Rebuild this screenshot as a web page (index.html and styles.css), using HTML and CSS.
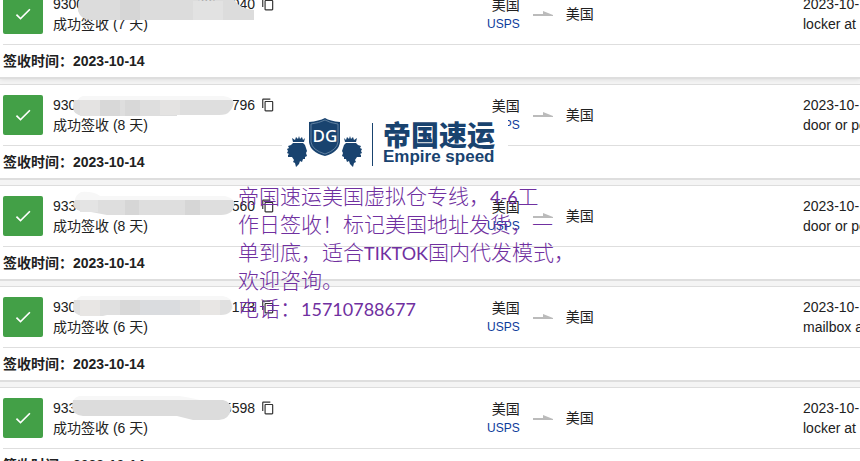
FILE: index.html
```html
<!DOCTYPE html>
<html lang="zh-CN">
<head>
  <meta charset="UTF-8">
  <meta name="viewport" content="width=device-width, initial-scale=1.0">
  <title>帝国速运</title>
  <link rel="stylesheet" href="styles.css">
</head>
<body>

  <!-- 图标 -->
  <svg class="symbols" aria-hidden="true">
    <symbol id="check" viewBox="0 0 24 24"><path d="M9 16.17L4.83 12l-1.42 1.41L9 19 21 7l-1.41-1.41z"/></symbol>
    <symbol id="copy" viewBox="0 0 24 24"><path d="M16 1H4c-1.1 0-2 .9-2 2v14h2V3h12V1zm3 4H8c-1.1 0-2 .9-2 2v14c0 1.1.9 2 2 2h11c1.1 0 2-.9 2-2V7c0-1.1-.9-2-2-2zm0 16H8V7h11v14z"/></symbol>
    <symbol id="arrow" viewBox="0 0 20 8"><path d="M0 4h10V1l10 4v1H0z"/></symbol>
    <g id="lion">
      <path d="M8 24l3 2 1-3 2 2 1-3 1 3 2-2 1 3 2-2-1 4H9z"/>
      <path d="M9 29H19L21 31 22 34 23 37 22 39 23 42 21 43 21 45 19 45 18 48 16 47 15 50 12 53 11 49 9 48 10 46 8 43 4 43 4 41 5 40 3 39 4 37 3 35 5 34 4 32 7 31z"/>
    </g>
  </svg>

  <main class="page">
    <ul class="parcel_list">

      <li class="parcel raised">
        <div class="parcel_main">
          <span class="status"><svg><use href="#check"/></svg></span>
          <div class="track">
            <div class="number">
              <span class="digits"><span>9300</span><span>00000040</span></span>
              <button type="button" class="copy_btn" aria-label="复制"><svg><use href="#copy"/></svg></button>
              <svg class="mask" viewBox="0 0 190 28">
                <path fill="#dcdcdc" d="M8 5H112Q140 8 160 4Q166 15 181 16V26H18Q8 26 5 17Q5 8 8 5z"/>
                <path fill="#d6d6d6" d="M47 5h20v21H47z"/>
                <path fill="#e2e2e2" d="M120 7h30v19h-30z"/>
              </svg>
            </div>
            <p>成功签收 (7 天)</p>
          </div>
          <div class="route">
            <div class="origin"><span>美国</span><a href="#usps">USPS</a></div>
            <svg class="arrow"><use href="#arrow"/></svg>
            <span>美国</span>
          </div>
          <p class="event">2023-10-<br>locker at</p>
        </div>
        <p class="signed">签收时间：2023-10-14</p>
      </li>

      <li class="parcel">
        <div class="parcel_main">
          <span class="status"><svg><use href="#check"/></svg></span>
          <div class="track">
            <div class="number">
              <span class="digits"><span>930</span><span>796</span></span>
              <button type="button" class="copy_btn" aria-label="复制"><svg><use href="#copy"/></svg></button>
              <svg class="mask" viewBox="0 0 190 28">
                <path fill="#f7f7f7" d="M10 1H150Q161 2 161 10L150 14H4Q2 3 10 1z"/>
                <path fill="#dedede" d="M1 5H160Q162 11 156 17Q154 20 146 20H104V21H10Q0 20 0 12z"/>
                <path fill="#e4e3e2" d="M7 5h20v16H7zM87 5h20v15H87z"/>
                <path fill="#d8d8d8" d="M27 5h20v16H27zM52 5h15v16H52z"/>
              </svg>
            </div>
            <p>成功签收 (8 天)</p>
          </div>
          <div class="route">
            <div class="origin"><span>美国</span><a href="#usps">USPS</a></div>
            <svg class="arrow"><use href="#arrow"/></svg>
            <span>美国</span>
          </div>
          <p class="event">2023-10-<br>door or po</p>
        </div>
        <p class="signed">签收时间：2023-10-14</p>
      </li>

      <li class="parcel">
        <div class="parcel_main">
          <span class="status"><svg><use href="#check"/></svg></span>
          <div class="track">
            <div class="number">
              <span class="digits"><span>933</span><span>560</span></span>
              <button type="button" class="copy_btn" aria-label="复制"><svg><use href="#copy"/></svg></button>
              <svg class="mask" viewBox="0 0 190 28">
                <path fill="#f7f7f7" d="M8 -4Q20 -5 27 0H152Q160 2 161 6V12H8Q-4 4 8 -4z"/>
                <path fill="#dedede" d="M2 4H160Q163 11 158 16Q154 19 148 19H34L18 16Q3 17 0 9z"/>
                <path fill="#d6d6d6" d="M52 4h14v15H52zM112 4h15v15h-15z"/>
                <path fill="#e4e4e4" d="M7 4h18v12H7z"/>
              </svg>
            </div>
            <p>成功签收 (8 天)</p>
          </div>
          <div class="route">
            <div class="origin"><span>美国</span><a href="#usps">USPS</a></div>
            <svg class="arrow"><use href="#arrow"/></svg>
            <span>美国</span>
          </div>
          <p class="event">2023-10-<br>door or po</p>
        </div>
        <p class="signed">签收时间：2023-10-14</p>
      </li>

      <li class="parcel">
        <div class="parcel_main">
          <span class="status"><svg><use href="#check"/></svg></span>
          <div class="track">
            <div class="number">
              <span class="digits"><span>930</span><span>173</span></span>
              <button type="button" class="copy_btn" aria-label="复制"><svg><use href="#copy"/></svg></button>
              <svg class="mask" viewBox="0 0 190 28">
                <path fill="#f7f7f7" d="M8 -1H150Q159 1 160 8V12H4Q0 2 8 -1z"/>
                <path fill="#e0e0e0" d="M1 3H157Q161 11 157 15Q154 18 148 18H34L30 19H10Q0 18 0 10z"/>
                <path fill="#e8e6e4" d="M7 3h20v16H7zM127 3h20v15h-20z"/>
                <path fill="#d8d8d8" d="M47 3h20v15H47z"/>
                <path fill="#dadcdf" d="M67 3h40v15H67z"/>
              </svg>
            </div>
            <p>成功签收 (6 天)</p>
          </div>
          <div class="route">
            <div class="origin"><span>美国</span><a href="#usps">USPS</a></div>
            <svg class="arrow"><use href="#arrow"/></svg>
            <span>美国</span>
          </div>
          <p class="event">2023-10-<br>mailbox at</p>
        </div>
        <p class="signed">签收时间：2023-10-14</p>
      </li>

      <li class="parcel">
        <div class="parcel_main">
          <span class="status"><svg><use href="#check"/></svg></span>
          <div class="track">
            <div class="number">
              <span class="digits"><span>933</span><span>5598</span></span>
              <button type="button" class="copy_btn" aria-label="复制"><svg><use href="#copy"/></svg></button>
              <svg class="mask" viewBox="0 0 190 28">
                <path fill="#f7f7f7" d="M6 -2H106Q120 0 130 3V8H2Q-2 0 6 -2z"/>
                <path fill="#dcdcdc" d="M0 2H150Q158 4 158 11Q156 22 146 22H120L104 18H10Q-1 17 -1 8z"/>
              </svg>
            </div>
            <p>成功签收 (6 天)</p>
          </div>
          <div class="route">
            <div class="origin"><span>美国</span><a href="#usps">USPS</a></div>
            <svg class="arrow"><use href="#arrow"/></svg>
            <span>美国</span>
          </div>
          <p class="event">2023-10-<br>locker at</p>
        </div>
        <p class="signed">签收时间：2023-10-14</p>
      </li>

    </ul>

    <!-- 浮在列表上的标志 -->
    <div class="logo">
      <svg class="emblem" viewBox="0 0 82 56">
        <use href="#lion"/>
        <use href="#lion" transform="translate(81 0) scale(-1 1)"/>
        <path d="M25 8Q35 7 41 4Q46 7 56 8V28Q55 38 41 42Q26 38 25 28z"/>
        <path class="trim" d="M27 10Q35 9 41 6Q46 9 54 10V28Q53 36 41 40Q28 36 27 28z"/>
        <text x="41" y="28" text-anchor="middle">DG</text>
      </svg>
      <div class="logo_text">
        <strong>帝国速运</strong>
        <span>Empire speed</span>
      </div>
    </div>

    <!-- 浮在列表上的说明 -->
    <p class="notice">
      帝国速运美国虚拟仓专线，<b>4-6</b>工<br>
      作日签收！标记美国地址发货，一<br>
      单到底，适合<b>TIKTOK</b>国内代发模式，<br>
      欢迎咨询。<br>
      电话：<b>15710788677</b>
    </p>
  </main>

</body>
</html>
```

FILE: styles.css
```css
body,ul,li,p{
  margin:0; padding:0; list-style:none;
}

body{
  background:#f4f4f4; color:#212121;
  font:14px/20px "Liberation Sans", "Noto Sans CJK SC", sans-serif;
}

svg{
  display:block; fill:currentColor;
}

.symbols{
  position:absolute; width:0; height:0;
}

.page{
  position:relative; height:100vh; overflow:hidden;
}

/* 列表 */

.parcel_list{
  display:flex; flex-direction:column; gap:5px; margin-top:-17px;
}

.parcel{
  padding-left:3px; background:#fff;
  border-top:1px solid #ddd; border-bottom:2px solid #dedede;
}

.parcel.raised{
  box-shadow:0 0 5px rgba(0,0,0,.12);
}

.parcel_main{
  display:grid; align-items:center;
  grid-template-columns:50px minmax(0,434fr) minmax(0,316fr) minmax(0,57fr);
  padding:10px 0; border-bottom:1px solid #dedede;
}

.status{
  display:flex; align-items:center; justify-content:center;
  width:40px; height:40px; border-radius:2px; background:#43a047; color:#fff;
}

.status svg{
  width:20px; height:20px;
}

.number{
  position:relative; display:flex; align-items:center; gap:6px;
}

.digits{
  display:flex; justify-content:space-between; width:202px;
}

.copy_btn{
  padding:0; border:0; background:none; color:#333; cursor:pointer;
}

.copy_btn svg{
  width:14px; height:14px;
}

.mask{
  position:absolute; left:20px; top:0; width:190px; height:28px; overflow:visible;
}

.route{
  display:flex; align-items:center; gap:13px;
}

.origin{
  display:flex; flex-direction:column; align-items:flex-end;
}

.origin a{
  color:#0d3c9b; font-size:12px; line-height:18px; text-decoration:none;
}

.arrow{
  width:20px; height:8px; color:#bbb;
}

.event{
  white-space:nowrap;
}

.signed{
  padding:6px 0; font-weight:bold;
}

/* 标志 */

.logo{
  position:absolute; left:282px; top:114px;
  display:flex; align-items:flex-start; gap:6px;
  box-sizing:border-box; width:226px; height:62px; padding-left:2px;
  background:#fff; color:#19436f;
}

.emblem{
  width:82px; height:56px;
}

.emblem .trim{
  fill:none; stroke:#5f7f9f; stroke-width:1;
}

.emblem text{
  fill:#fff; font:500 17px "Noto Sans", sans-serif;
}

.logo_text{
  display:flex; flex-direction:column; gap:3px; margin-top:9px;
  padding-left:10px; border-left:1px solid #19436f;
}

.logo_text strong{
  font:900 28px/22px "Noto Sans CJK SC", sans-serif;
}

.logo_text span{
  font-size:17px; font-weight:bold; line-height:18px; white-space:nowrap;
}

/* 说明 */

.notice{
  position:absolute; left:238px; top:181px;
  color:#7030a0; white-space:nowrap;
  font:300 21px/28px "Noto Sans CJK SC", sans-serif;
}

.notice b{
  font:400 18px/20px Lato, sans-serif;
}
```
